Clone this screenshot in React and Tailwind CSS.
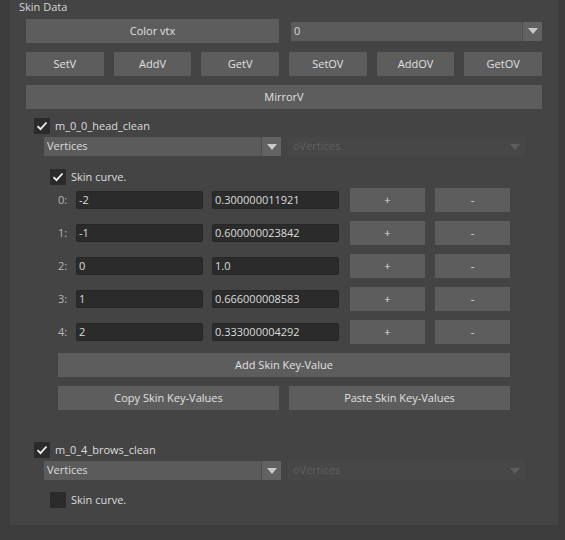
import React from 'react'

const font = { fontFamily: '"Open Sans", "Noto Sans", sans-serif' }

function Arrow({ disabled }) {
  return (
    <svg width="10" height="6" viewBox="0 0 10 6">
      <path d="M0 0 L10 0 L5 6 Z" fill={disabled ? '#5e5e5e' : '#c9c9c9'} />
    </svg>
  )
}

function Combo({ label, width, disabled }) {
  if (disabled) {
    return (
      <div className={`flex h-[19px] ${width} items-center bg-[#474747]`}>
        <span className="flex-1 pl-[5px] text-[#5f5f5f]">{label}</span>
        <div className="flex w-[20px] items-center justify-center">
          <Arrow disabled />
        </div>
      </div>
    )
  }
  return (
    <div className={`flex h-[19px] ${width} items-center bg-[#5b5b5b]`}>
      <span className="flex-1 pl-[3px] text-[#dcdcdc]">{label}</span>
      <div className="flex h-full w-[20px] items-center justify-center border-l border-[#4f4f4f] bg-[#626262]">
        <Arrow />
      </div>
    </div>
  )
}

function Check({ checked, label }) {
  return (
    <div className="flex h-[16px] items-center gap-[5px]">
      <div className="flex h-[16px] w-[16px] items-center justify-center bg-[#2b2b2b]">
        {checked && (
          <svg width="12" height="10" viewBox="0 0 12 10">
            <path d="M1.5 5.2 L4.5 8.2 L10.5 1.5" stroke="#f0f0f0" strokeWidth="1.8" fill="none" />
          </svg>
        )}
      </div>
      <span className="text-[#dcdcdc]">{label}</span>
    </div>
  )
}

function Btn({ children, className = '' }) {
  return (
    <div className={`flex h-[24px] items-center justify-center bg-[#5d5d5d] text-[#e0e0e0] ${className}`}>
      {children}
    </div>
  )
}

function Field({ value }) {
  return (
    <div className="flex h-[18px] w-[127px] items-center rounded-[2px] border border-[#262626] bg-[#2b2b2b] pl-[2px] text-[#dcdcdc]">
      {value}
    </div>
  )
}

const rows = [
  ['-2', '0.300000011921'],
  ['-1', '0.600000023842'],
  ['0', '1.0'],
  ['1', '0.666000008583'],
  ['2', '0.333000004292'],
]

export default function App() {
  return (
    <div className="h-[540px] w-[565px] bg-[#3c3c3c] pt-[5px] pl-[10px] text-[11px]" style={font}>
      <div className="h-[525px] w-[548px] bg-[#444444] px-[16px]">
        <div className="-mt-[5px] -ml-[7px] h-[13px] leading-[13px] text-[#d4d4d4]">Skin Data</div>

        <div className="mt-[6px] flex items-center gap-[12px]">
          <Btn className="w-[253px]">Color vtx</Btn>
          <Combo label="0" width="w-[251px]" />
        </div>

        <div className="mt-[9px] grid grid-cols-6 gap-[10px]">
          {['SetV', 'AddV', 'GetV', 'SetOV', 'AddOV', 'GetOV'].map((t) => (
            <Btn key={t}>{t}</Btn>
          ))}
        </div>

        <Btn className="mt-[9px]">MirrorV</Btn>

        <div className="mt-[9px] pl-[8px]">
          <Check checked label="m_0_0_head_clean" />
        </div>
        <div className="mt-[3px] flex gap-[7px] pl-[18px]">
          <Combo label="Vertices" width="w-[237px]" />
          <Combo label="oVertices" width="w-[237px]" disabled />
        </div>
        <div className="mt-[13px] pl-[24px]">
          <Check checked label="Skin curve." />
        </div>

        <div className="mt-[3px] ml-[32px] flex w-[452px] flex-col gap-[9px]">
          {rows.map(([a, b], i) => (
            <div key={i} className="flex h-[24px] items-center">
              <span className="w-[18px] text-[#b8b8b8]">{i}:</span>
              <Field value={a} />
              <div className="w-[9px]" />
              <Field value={b} />
              <Btn className="ml-[11px] w-[75px]">+</Btn>
              <Btn className="ml-[10px] w-[75px]">-</Btn>
            </div>
          ))}
          <Btn>Add Skin Key-Value</Btn>
          <div className="grid grid-cols-2 gap-[10px]">
            <Btn>Copy Skin Key-Values</Btn>
            <Btn>Paste Skin Key-Values</Btn>
          </div>
        </div>

        <div className="mt-[32px] pl-[8px]">
          <Check checked label="m_0_4_brows_clean" />
        </div>
        <div className="mt-[3px] flex gap-[7px] pl-[18px]">
          <Combo label="Vertices" width="w-[237px]" />
          <Combo label="oVertices" width="w-[237px]" disabled />
        </div>
        <div className="mt-[12px] pl-[24px]">
          <Check label="Skin curve." />
        </div>
      </div>
    </div>
  )
}
